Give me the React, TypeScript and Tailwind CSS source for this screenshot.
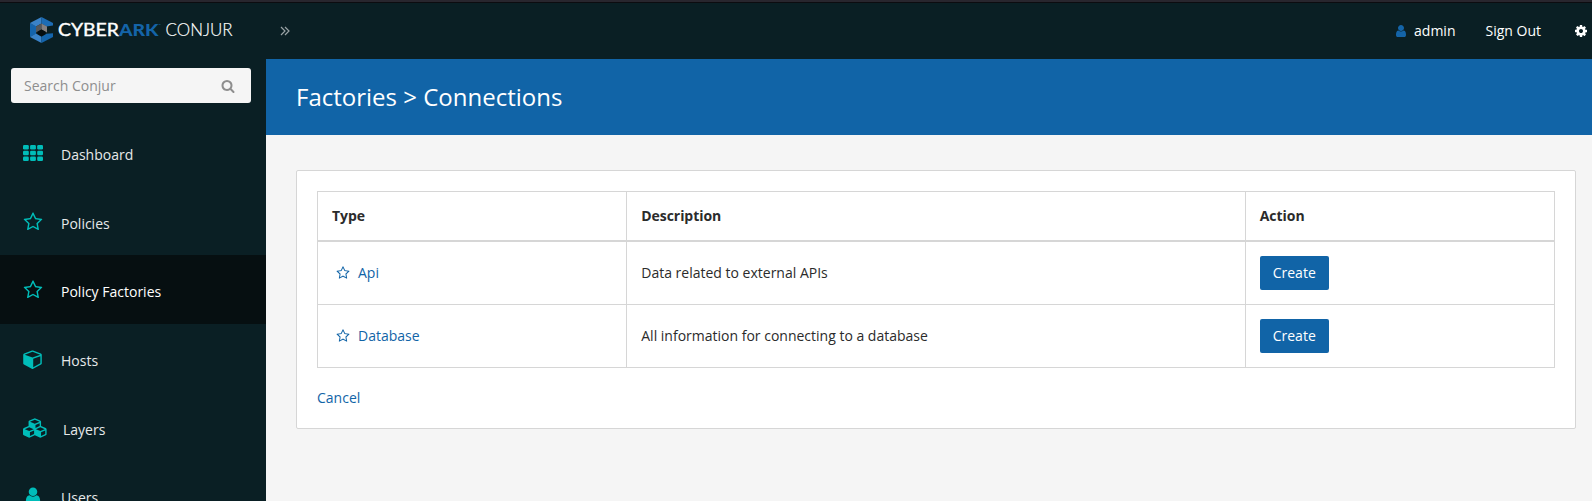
import type { ReactNode } from "react";

const STAR =
  "M1201 1004l306-297-422-62-189-382-189 382-422 62 306 297-73 421 378-199 377 199zm527-357q0 22-26 48l-363 354 86 500q1 7 1 20 0 50-41 50-19 0-40-12l-449-236-449 236q-22 12-40 12-21 0-31.5-14.5t-10.5-35.5q0-6 2-20l86-500-364-354q-25-27-25-48 0-37 56-46l502-73 225-455q19-41 49-41t49 41l225 455 502 73q56 9 56 46z";
const SEARCH =
  "M1216 832q0-185-131.5-316.5t-316.5-131.5-316.5 131.5-131.5 316.5 131.5 316.5 316.5 131.5 316.5-131.5 131.5-316.5zm512 832q0 52-38 90t-90 38q-54 0-90-38l-343-342q-179 124-399 124-143 0-273.5-55.5t-225-150-150-225-55.5-273.5 55.5-273.5 150-225 225-150 273.5-55.5 273.5 55.5 225 150 150 225 55.5 273.5q0 220-124 399l343 343q37 37 37 90z";
const COG =
  "M1152 896q0-106-75-181t-181-75-181 75-75 181 75 181 181 75 181-75 75-181zm512-109v222q0 12-8 23t-20 13l-185 28q-19 54-39 91 35 50 107 138 10 12 10 25t-9 23q-27 37-99 108t-94 71q-12 0-26-9l-138-108q-44 23-91 38-16 136-29 186-7 28-36 28h-222q-14 0-24.5-8.5t-11.5-21.5l-28-184q-49-16-90-37l-141 107q-10 9-25 9-14 0-25-11-126-114-165-168-7-10-7-23 0-12 8-23 15-21 51-66.5t54-70.5q-27-50-41-99l-183-27q-13-2-21-12.5t-8-23.5v-222q0-12 8-23t19-13l186-28q14-46 39-92-40-57-107-138-10-12-10-24 0-10 9-23 26-36 98.5-107.5t94.5-71.5q13 0 26 10l138 107q44-23 91-38 16-136 29-186 7-28 36-28h222q14 0 24.5 8.5t11.5 21.5l28 184q49 16 90 37l142-107q9-9 24-9 13 0 25 10 129 119 165 170 7 8 7 22 0 12-8 23-15 21-51 66.5t-54 70.5q26 50 41 98l183 28q13 2 21 12.5t8 23.5z";
const USER =
  "M1536 1399q0 109-62.5 187t-150.5 78h-854q-88 0-150.5-78t-62.5-187q0-85 8.5-160.5t31.5-152 58.5-131 94-89 134.5-34.5q131 128 313 128t313-128q76 0 134.5 34.5t94 89 58.5 131 31.5 152 8.5 160.5zm-256-887q0 159-112.5 271.5t-271.5 112.5-271.5-112.5-112.5-271.5 112.5-271.5 271.5-112.5 271.5 112.5 112.5 271.5z";
const CUBE =
  "M896 1629l640-349v-636l-640 233v752zm-64-865l698-254-698-254-698 254zm832-252v768q0 35-18 65t-49 47l-704 384q-28 16-61 16t-61-16l-704-384q-31-17-49-47t-18-65v-768q0-40 23-73t61-47l704-256q22-8 44-8t44 8l704 256q38 14 61 47t23 73z";
const CUBES =
  "M640 1632l384-192v-314l-384 164v342zm-64-454l404-173-404-173-404 173zm1088 454l384-192v-314l-384 164v342zm-64-454l404-173-404-173-404 173zm-448-293l384-165v-266l-384 164v267zm-64-379l441-189-441-189-441 189zm1088 518v416q0 36-19 67t-52 47l-448 224q-25 14-57 14t-57-14l-448-224q-5-2-7-4-2 2-7 4l-448 224q-25 14-57 14t-57-14l-448-224q-33-16-52-47t-19-67v-416q0-38 21.5-70t56.5-48l434-186v-400q0-38 21.5-70t56.5-48l448-192q23-10 50-10t50 10l448 192q35 16 56.5 48t21.5 70v400l434 186q36 16 57 48t21 70z";

function Icon({ d, box = "0 0 1792 1792", className }: { d: string; box?: string; className: string }) {
  return (
    <svg viewBox={box} className={`shrink-0 fill-current ${className}`} aria-hidden="true">
      <path d={d} />
    </svg>
  );
}

function GridIcon() {
  return (
    <svg viewBox="0 0 20 16" className="h-4 w-5 shrink-0 fill-current" aria-hidden="true">
      {[0, 5.8, 11.6].map((y) =>
        [0, 7.1, 14.2].map((x) => <rect key={`${x}-${y}`} x={x} y={y} width="5.8" height="4.4" rx="1.2" />)
      )}
    </svg>
  );
}

function Logo() {
  return (
    <div className="flex items-center pb-0.5 text-white">
      <svg viewBox="0 0 23 26" className="h-[26px] w-[23px] shrink-0" aria-hidden="true">
        <path d="M0 6l6 3.200v7.600L0 20z" fill="#1464ac" />
        <path d="M11.500 0L0 6l6 3.400 5.500-3z" fill="#3a82c8" />
        <path d="M11.500 0v6.400l5 3.200 6.500-1.200V6z" fill="#1d6cb5" />
        <path d="M0 20l6-3.400 5.500 3.200V26z" fill="#3a82c8" />
        <path d="M11.500 19.800l5-3 6.500-.6V20l-11.500 6z" fill="#1464ac" />
        <path d="M11.500 6.400L6 9.400v6.200l5.500-3z" fill="#55585c" />
        <path d="M11.500 6.400l5.500 3v6.200l-5.500-3z" fill="#858081" />
        <path d="M11.500 12.600l-4 2.200v2.300l4 2.200 4-2.200v-2.300z" fill="#050d10" />
      </svg>
      <svg viewBox="0 0 180 20" className="ml-[5px] h-5 w-[180px]" fontFamily="Lato, sans-serif" fontSize="16.6">
        <text x="0" y="15.800" textLength="61" lengthAdjust="spacingAndGlyphs" fontWeight="400" fill="#fff" stroke="#fff" strokeWidth="0.35">CYBER</text>
        <text x="61" y="15.800" textLength="39.500" lengthAdjust="spacingAndGlyphs" fontWeight="900" fill="#1464a8">ARK</text>
        <text x="100.500" y="6" fontSize="3" fill="#1464a8">™</text>
        <text x="107.500" y="15.800" textLength="67" lengthAdjust="spacingAndGlyphs" fontWeight="300" fill="#fff" stroke="#fff" strokeWidth="0.15">CONJUR</text>
      </svg>
    </div>
  );
}

const NAV: { label: string; icon: ReactNode; active?: boolean; pad?: string }[] = [
  { label: "Dashboard", icon: <GridIcon /> },
  { label: "Policies", icon: <Icon d={STAR} className="size-5" /> },
  { label: "Policy Factories", icon: <Icon d={STAR} className="size-5" />, active: true },
  { label: "Hosts", icon: <Icon d={CUBE} box="0 0 1664 1792" className="h-5 w-[19px]" /> },
  { label: "Layers", icon: <Icon d={CUBES} box="0 0 2304 1792" className="h-5 w-[25px]" />, pad: "pl-0.5" },
  { label: "Users", icon: <Icon d={USER} className="size-5" /> },
];

const ROWS = [
  { type: "Api", description: "Data related to external APIs" },
  { type: "Database", description: "All information for connecting to a database" },
];

export default function App() {
  return (
    <div className="flex h-[501px] w-[1592px] flex-col overflow-hidden bg-[#f5f5f5] font-['Open_Sans','Noto_Sans',sans-serif] text-[14px] leading-5 text-[#2b2b2b]">
      <div className="h-[3px] shrink-0 border-b border-[#0c0c10] bg-[#28262e]" />
      <header className="flex h-14 shrink-0 items-center bg-[#0a1f24] text-white">
        <div className="flex w-[266px] pl-[30px]">
          <Logo />
        </div>
        <svg viewBox="0 0 10 10" className="ml-[14px] size-[10px] fill-none stroke-[#9aa3a6] stroke-[1.2]" aria-hidden="true">
          <path d="M1 1l4 4-4 4M5 1l4 4-4 4" />
        </svg>
        <div className="ml-auto flex items-center">
          <Icon d={USER} className="size-[14px] text-[#1464a8]" />
          <span className="ml-[6px]">admin</span>
          <span className="ml-[30px]">Sign Out</span>
          <Icon d={COG} className="mr-1 ml-[33px] size-[14px]" />
        </div>
      </header>
      <div className="flex min-h-0 flex-1">
        <aside className="flex w-[266px] shrink-0 flex-col overflow-hidden bg-[#0a1f24]">
          <div className="mx-[11px] mt-[9px] mb-[15px] flex h-[35px] w-60 shrink-0 items-center justify-between rounded-[3px] bg-[#f5f5f5] pr-4 pl-[13px] text-[#8e8e8e]">
            <span>Search Conjur</span>
            <Icon d={SEARCH} className="size-[14px]" />
          </div>
          <nav>
            {NAV.map((item) => (
              <a
                key={item.label}
                className={`flex h-[68.6px] items-center pt-1.5 pl-[23px] ${item.active ? "bg-[#060f11] text-white" : "text-[#e6e9ea]"}`}
              >
                <span className="flex w-[38px] -translate-y-0.5 text-[#00bdb9]">{item.icon}</span>
                <span className={item.pad}>{item.label}</span>
              </a>
            ))}
          </nav>
        </aside>
        <main className="flex flex-1 flex-col">
          <div className="flex h-[76px] items-center bg-[#1164a7] pl-[30px]">
            <h1 className="text-[24px] leading-8 text-white">Factories &gt; Connections</h1>
          </div>
          <section className="mt-[35px] mr-4 ml-[30px] h-[259px] rounded-[2px] border border-[#d6d6d6] bg-white p-5">
            <table className="w-full table-fixed border-collapse text-left">
              <colgroup>
                <col className="w-1/4" />
                <col className="w-1/2" />
                <col className="w-1/4" />
              </colgroup>
              <thead>
                <tr className="h-[49px]">
                  {["Type", "Description", "Action"].map((h) => (
                    <th key={h} className="border border-b-2 border-[#d6d6d6] px-[14px] font-bold tracking-[-0.05px]">
                      {h}
                    </th>
                  ))}
                </tr>
              </thead>
              <tbody>
                {ROWS.map((row, i) => (
                  <tr key={row.type} className={i === 0 ? "h-16" : "h-[63px]"}>
                    <td className="border border-[#d6d6d6] px-[14px]">
                      <a className="flex items-center text-[#1164a7]">
                        <Icon d={STAR} className="ml-1 size-[14px]" />
                        <span className="ml-[8px]">{row.type}</span>
                      </a>
                    </td>
                    <td className="border border-[#d6d6d6] px-[14px]">{row.description}</td>
                    <td className="border border-[#d6d6d6] px-[14px]">
                      <button className="block h-[34px] w-[69px] rounded-[2px] bg-[#1164a7] text-center text-white">Create</button>
                    </td>
                  </tr>
                ))}
              </tbody>
            </table>
            <a className="mt-5 block text-[#1164a7]">Cancel</a>
          </section>
        </main>
      </div>
    </div>
  );
}
